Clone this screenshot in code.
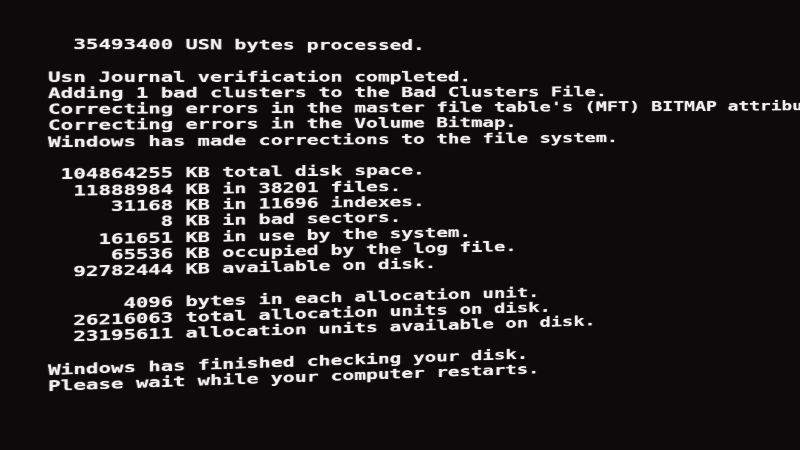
const lines: string[] = [
  "  35493400 USN bytes processed.",
  "",
  "Usn Journal verification completed.",
  "Adding 1 bad clusters to the Bad Clusters File.",
  "Correcting errors in the master file table's (MFT) BITMAP attribute.",
  "Correcting errors in the Volume Bitmap.",
  "Windows has made corrections to the file system.",
  "",
  " 104864255 KB total disk space.",
  "  11888984 KB in 38201 files.",
  "     31168 KB in 11696 indexes.",
  "         8 KB in bad sectors.",
  "    161651 KB in use by the system.",
  "     65536 KB occupied by the log file.",
  "  92782444 KB available on disk.",
  "",
  "      4096 bytes in each allocation unit.",
  "  26216063 total allocation units on disk.",
  "  23195611 allocation units available on disk.",
  "",
  "Windows has finished checking your disk.",
  "Please wait while your computer restarts.",
];

const App = () => {
  return (
    <div className="w-[800px] h-[450px] overflow-hidden bg-[#0c0a0a] pl-[48px] pt-[36px]">
      <div
        className="
          origin-[0px_34px]
          [transform:perspective(700px)_rotateY(4.5deg)_scaleX(1.51)]
          font-['DejaVu_Sans_Mono','Liberation_Mono',monospace]
          font-bold
          text-[14px]
          leading-[16.3px]
          text-[#f1efef]
          [text-shadow:0_0_1px_rgba(255,255,255,0.7)]
          whitespace-pre"
      >
        {lines.map((line, i) => (
          <div key={i} className="h-[16.3px]">
            {line}
          </div>
        ))}
      </div>
    </div>
  );
};

export default App;
